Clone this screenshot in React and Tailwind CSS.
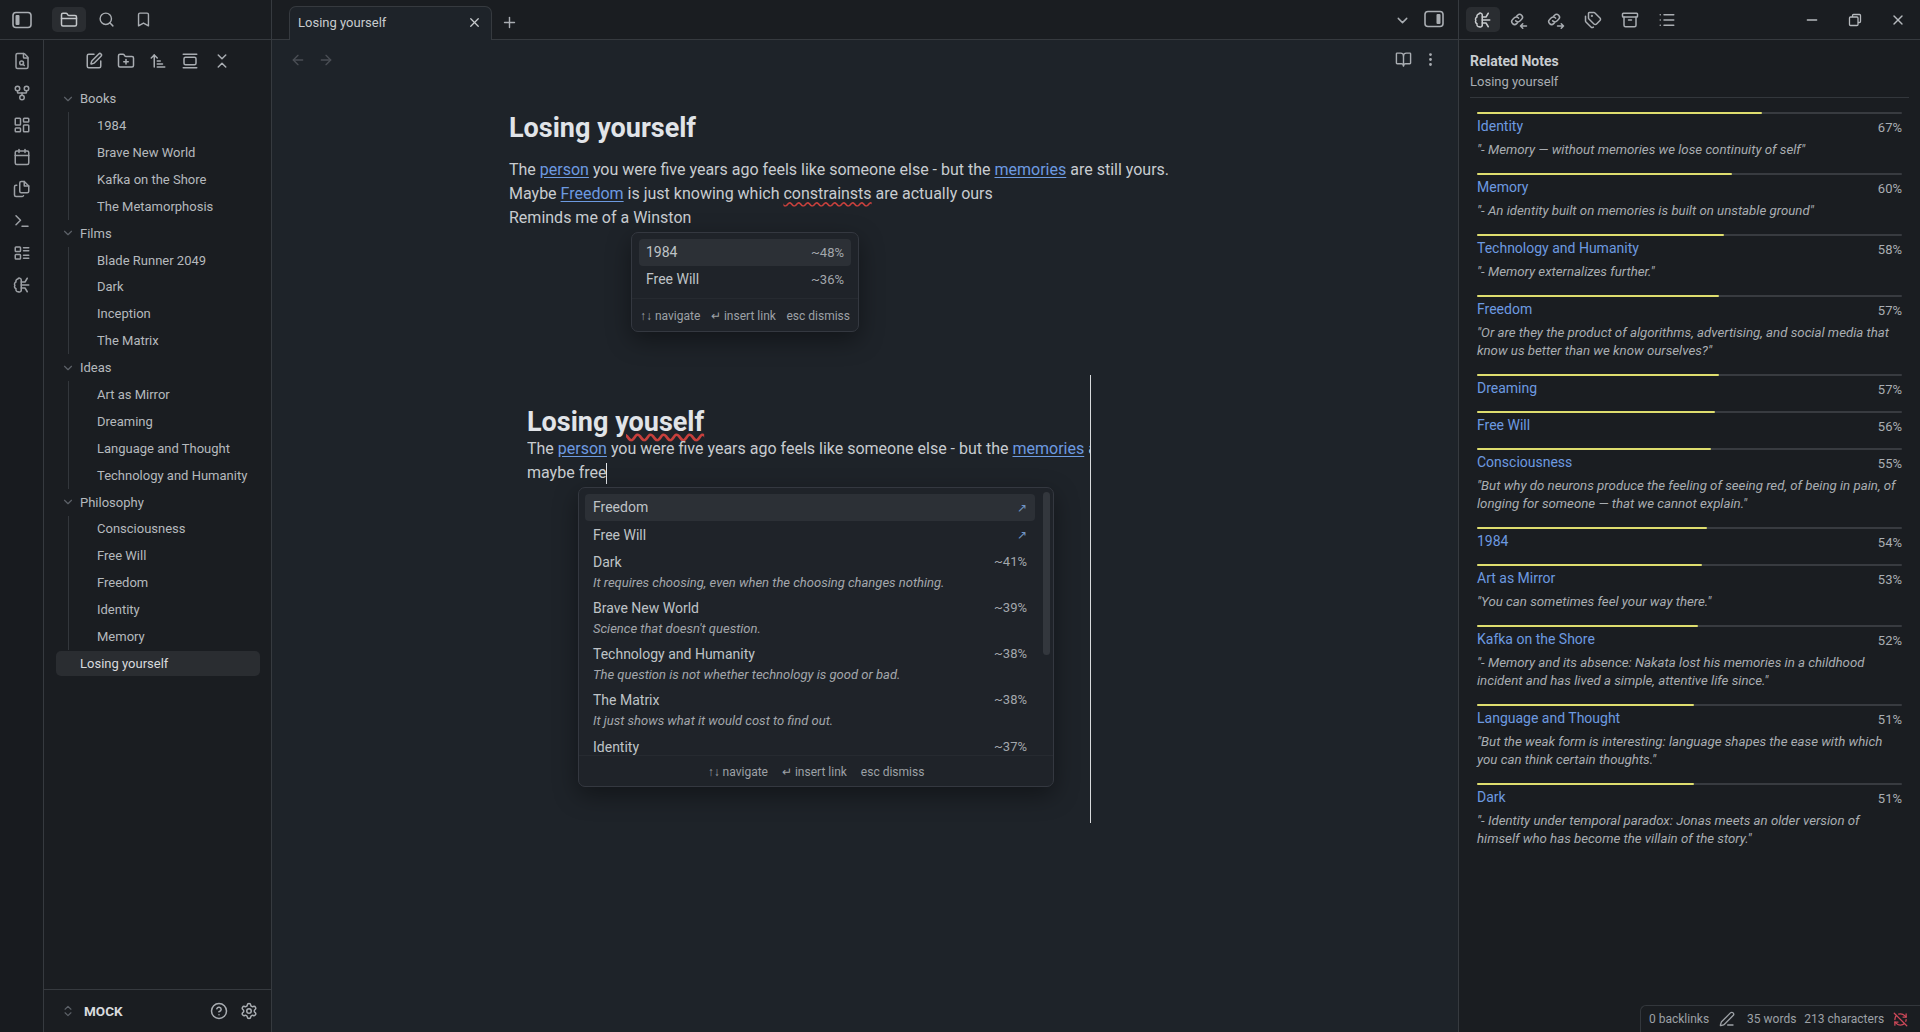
import React from "react";
import {
  Archive, ArrowLeft, ArrowRight, ArrowUpNarrowWide, BookOpen, Bookmark, Calendar, ChevronDown, ChevronsDownUp,
  ChevronsUpDown, CircleHelp, EllipsisVertical, FileSearch, FolderClosed, FolderPlus, GitFork, LayoutDashboard,
  List, Minus, PenLine, Plus, RefreshCwOff, Search, Settings, SquarePen, Tags, Terminal, X,
} from "lucide-react";

const tree = [
  { name: "Books", items: ["1984", "Brave New World", "Kafka on the Shore", "The Metamorphosis"] },
  { name: "Films", items: ["Blade Runner 2049", "Dark", "Inception", "The Matrix"] },
  { name: "Ideas", items: ["Art as Mirror", "Dreaming", "Language and Thought", "Technology and Humanity"] },
  { name: "Philosophy", items: ["Consciousness", "Free Will", "Freedom", "Identity", "Memory"] },
];

const related = [
  { title: "Identity", pct: 67, quote: '"- Memory — without memories we lose continuity of self"' },
  { title: "Memory", pct: 60, quote: '"- An identity built on memories is built on unstable ground"' },
  { title: "Technology and Humanity", pct: 58, quote: '"- Memory externalizes further."' },
  { title: "Freedom", pct: 57, quote: '"Or are they the product of algorithms, advertising, and social media that know us better than we know ourselves?"' },
  { title: "Dreaming", pct: 57 },
  { title: "Free Will", pct: 56 },
  { title: "Consciousness", pct: 55, quote: '"But why do neurons produce the feeling of seeing red, of being in pain, of longing for someone — that we cannot explain."' },
  { title: "1984", pct: 54 },
  { title: "Art as Mirror", pct: 53, quote: '"You can sometimes feel your way there."' },
  { title: "Kafka on the Shore", pct: 52, quote: '"- Memory and its absence: Nakata lost his memories in a childhood incident and has lived a simple, attentive life since."' },
  { title: "Language and Thought", pct: 51, quote: '"But the weak form is interesting: language shapes the ease with which you can think certain thoughts."' },
  { title: "Dark", pct: 51, quote: '"- Identity under temporal paradox: Jonas meets an older version of himself who has become the villain of the story."' },
];

const suggestions = [
  { title: "Dark", pct: "~41%", sub: "It requires choosing, even when the choosing changes nothing." },
  { title: "Brave New World", pct: "~39%", sub: "Science that doesn't question." },
  { title: "Technology and Humanity", pct: "~38%", sub: "The question is not whether technology is good or bad." },
  { title: "The Matrix", pct: "~38%", sub: "It just shows what it would cost to find out." },
];

const Svg = ({ size = 18, children }) => (
  <svg width={size} height={size} viewBox="0 0 24 24" fill="none" stroke="currentColor" strokeWidth="2" strokeLinecap="round" strokeLinejoin="round">
    {children}
  </svg>
);

const PanelIcon = ({ side }) => (
  <svg width="20" height="18" viewBox="0 0 20 18" fill="none">
    <rect x="1" y="1.5" width="18" height="15" rx="3" stroke="currentColor" strokeWidth="1.6" />
    <rect x={side === "left" ? 3.5 : 12.5} y="4" width="4" height="10" rx="1" fill="currentColor" />
  </svg>
);

const BrainIcon = () => (
  <Svg>
    <path d="M11 5a2.5 2.5 0 0 0-4.6-1A3 3 0 0 0 4 8a3 3 0 0 0-1.5 4.5A3 3 0 0 0 4 17a3 3 0 0 0 3 4 2.8 2.8 0 0 0 4-1.5z" />
    <path d="M11 8h5l3-5M11 12h10M11 16h5l3 5" />
  </Svg>
);

const LinkArrow = ({ out }) => (
  <Svg>
    <path d="M7.5 13a3.8 3.8 0 0 0 5.7.4l2.3-2.3a3.8 3.8 0 0 0-5.4-5.4L9 6.8" />
    <path d="M11.5 9.5a3.8 3.8 0 0 0-5.7-.4l-2.3 2.3a3.8 3.8 0 0 0 5.4 5.4l1.1-1.1" />
    {out ? <path d="M14 20h8M19 17l3 3-3 3" /> : <path d="M14 20h8M17 17l-3 3 3 3" />}
  </Svg>
);

const FilesIcon = () => (
  <Svg>
    <path d="M15 2h-4a2 2 0 0 0-2 2v11a2 2 0 0 0 2 2h8a2 2 0 0 0 2-2V8z" />
    <path d="M15 2v6h6" />
    <path d="M5 7H4a2 2 0 0 0-2 2v11a2 2 0 0 0 2 2h8a2 2 0 0 0 2-1" />
  </Svg>
);

const ChecklistIcon = () => (
  <Svg>
    <rect x="3" y="4" width="7" height="6" rx="1" />
    <rect x="3" y="14" width="7" height="6" rx="1" />
    <path d="M14 5h7M14 9h7M14 15h7M14 19h7" />
  </Svg>
);

const RestoreIcon = () => (
  <svg width="14" height="14" viewBox="0 0 14 14" fill="none" stroke="currentColor" strokeWidth="1.3">
    <rect x="1.5" y="4" width="8.5" height="8.5" rx="1" />
    <path d="M4.5 4V2.5a1 1 0 0 1 1-1h6a1 1 0 0 1 1 1v6a1 1 0 0 1-1 1H10" />
  </svg>
);

const LayoutGalleryIcon = () => (
  <Svg>
    <path d="M3 3h18M3 21h18" />
    <rect x="4" y="7" width="16" height="10" rx="2" />
  </Svg>
);

const Folder = ({ group }) => (
  <div>
    <div className="flex h-[26.9px] items-center">
      <ChevronDown size={14} className="ml-[17px] text-[#5c6168]" />
      <span className="ml-[5px]">{group.name}</span>
    </div>
    <div className="ml-[24px] border-l border-[#33373c]">
      {group.items.map((item) => (
        <div key={item} className="flex h-[26.9px] items-center pl-[28px]">{item}</div>
      ))}
    </div>
  </div>
);

const LeftColumn = () => (
  <div className="flex h-full w-[272px] shrink-0 flex-col border-r border-[#363a3f] bg-[#1a1d21]">
    <div className="flex h-[40px] shrink-0 items-center border-b border-[#363a3f] text-[#a9adb2]">
      <div className="ml-[12px] w-[40px]"><PanelIcon side="left" /></div>
      <div className="flex h-[25px] w-[34px] items-center justify-center rounded-[5px] bg-[#2a2d31] text-[#c4c7ca]"><FolderClosed size={18} /></div>
      <div className="ml-[7px] flex w-[26px] justify-center"><Search size={17} /></div>
      <div className="ml-[11px] flex w-[26px] justify-center"><Bookmark size={17} /></div>
    </div>
    <div className="flex min-h-0 flex-1">
      <div className="flex w-[44px] shrink-0 flex-col items-center gap-[14px] border-r border-[#363a3f] bg-[#181b1f] pt-[12px] text-[#9ca0a5]">
        <FileSearch size={18} />
        <GitFork size={18} />
        <LayoutDashboard size={18} />
        <Calendar size={18} />
        <FilesIcon />
        <Terminal size={18} />
        <ChecklistIcon />
        <BrainIcon />
      </div>
      <div className="flex min-w-0 flex-1 flex-col">
        <div className="flex h-[45.5px] shrink-0 items-center gap-[14px] pb-[4px] pl-[41px] text-[#a9adb2]">
          <SquarePen size={18} />
          <FolderPlus size={18} />
          <ArrowUpNarrowWide size={18} />
          <LayoutGalleryIcon />
          <ChevronsDownUp size={18} />
        </div>
        <div className="flex-1 text-[13px] text-[#b5b9bd]">
          {tree.map((group) => <Folder key={group.name} group={group} />)}
          <div className="ml-[12px] mr-[11px] mt-px flex h-[25px] items-center rounded-[5px] bg-[#2a2d31] pl-[24px] text-[#d8dadd]">Losing yourself</div>
        </div>
        <div className="flex h-[43px] shrink-0 items-center border-t border-[#363a3f]">
          <ChevronsUpDown size={14} className="ml-[17px] text-[#5c6168]" />
          <span className="ml-[9px] flex-1 text-[13.5px] font-bold text-[#d8dadd]">MOCK</span>
          <CircleHelp size={18} className="text-[#a9adb2]" />
          <Settings size={18} className="ml-[12px] mr-[13px] text-[#a9adb2]" />
        </div>
      </div>
    </div>
  </div>
);

const FooterHints = ({ className }) => (
  <div className={"flex items-center text-[12px] text-[#9da1a6] " + className}>
    <span>↑↓ navigate</span>
    <span>↵ insert link</span>
    <span>esc dismiss</span>
  </div>
);

const SmallPopup = () => (
  <div className="absolute left-[359px] top-[232px] h-[100px] w-[228px] rounded-[7px] border border-[#343840] bg-[#1f2329] px-[7px] pt-[6px] text-[14px] text-[#bfc3c7] shadow-[0_8px_24px_rgba(0,0,0,0.4)]">
    <div className="flex h-[27px] items-center justify-between rounded-[4px] bg-[#2c3036] px-[7px]">
      <span>1984</span><span className="text-[13px] text-[#a3a7ac]">~48%</span>
    </div>
    <div className="flex h-[27px] items-center justify-between px-[7px]">
      <span>Free Will</span><span className="text-[13px] text-[#a3a7ac]">~36%</span>
    </div>
    <div className="-mx-[7px] mt-[5px] border-t border-[#262a30]">
      <FooterHints className="h-[34px] justify-between px-[8px]" />
    </div>
  </div>
);

const BigPopup = () => (
  <div className="absolute left-[306px] top-[487px] h-[300px] w-[476px] overflow-hidden rounded-[7px] border border-[#343840] bg-[#1f2329] text-[14px] text-[#bfc3c7] shadow-[0_8px_24px_rgba(0,0,0,0.4)]">
    <div className="absolute right-[3px] top-[4px] h-[163px] w-[7px] rounded-[4px] bg-[#33373d]" />
    <div className="h-[267px] overflow-hidden pl-[6px] pr-[18px] pt-[6px]">
      <div className="flex h-[27px] items-center justify-between rounded-[4px] bg-[#2c3036] px-[8px]">
        <span>Freedom</span><span className="text-[12px] text-[#6f94c4]">↗</span>
      </div>
      <div className="flex h-[28px] items-center justify-between px-[8px]">
        <span>Free Will</span><span className="text-[12px] text-[#6f94c4]">↗</span>
      </div>
      {suggestions.map((row) => (
        <div key={row.title} className="h-[46px] px-[8px]">
          <div className="flex h-[26px] items-center justify-between">
            <span>{row.title}</span><span className="text-[13px] text-[#a3a7ac]">{row.pct}</span>
          </div>
          <div className="-mt-[2px] text-[13px] italic text-[#a3a7ac]">{row.sub}</div>
        </div>
      ))}
      <div className="flex h-[28px] items-center justify-between px-[8px]">
        <span>Identity</span><span className="text-[13px] text-[#a3a7ac]">~37%</span>
      </div>
    </div>
    <div className="border-t border-[#262a30]">
      <FooterHints className="h-[31px] justify-center gap-[14px]" />
    </div>
  </div>
);

const Wiki = ({ children }) => <span className="text-[#6d9ae0] underline underline-offset-2">{children}</span>;

const Main = () => (
  <div className="relative flex h-full min-w-0 flex-1 flex-col bg-[#1e2329]">
    <div className="flex h-[40px] shrink-0 items-end border-b border-[#363a3f] bg-[#1a1d21] text-[#a9adb2]">
      <div className="relative -mb-px ml-[17px] flex h-[34px] w-[203px] items-center justify-between rounded-t-[7px] border border-b-0 border-[#363a3f] bg-[#1e2329] pb-[2px] pl-[8px] pr-[9px] text-[13px] text-[#c8cbce]">
        <span>Losing yourself</span>
        <X size={15} />
      </div>
      <Plus size={17} className="mb-[8px] ml-[9px]" />
      <div className="ml-auto mb-[10px] mr-[13px]"><ChevronDown size={17} /></div>
      <div className="mb-[11px] mr-[14px]"><PanelIcon side="right" /></div>
    </div>
    <div className="flex h-[39px] shrink-0 items-center pl-[18px] text-[#4a4e54]">
      <ArrowLeft size={16} />
      <ArrowRight size={16} className="ml-[12px]" />
      <div className="ml-auto flex items-center gap-[10px] pr-[19px] text-[#a9adb2]">
        <BookOpen size={17} />
        <EllipsisVertical size={17} />
      </div>
    </div>
    <div className="pl-[237px] text-[16px] leading-[24px] text-[#c8ccd0]">
      <h1 className="mt-[31px] text-[27px] font-bold leading-[36px] text-[#e1e4e8]">Losing yourself</h1>
      <div className="mt-[12px] whitespace-nowrap">The <Wiki>person</Wiki> you were five years ago feels like someone else - but the <Wiki>memories</Wiki> are still yours.</div>
      <div className="whitespace-nowrap">Maybe <Wiki>Freedom</Wiki> is just knowing which <span className="underline decoration-[#c8403c] decoration-wavy underline-offset-2">constrainsts</span> are actually ours</div>
      <div>Reminds me of a Winston</div>
      <div className="ml-[18px] mt-[145px] h-[448px] w-[564px] overflow-hidden whitespace-nowrap border-r border-[#d8dadc] pt-[32px]">
        <h2 className="text-[27px] font-bold leading-[30px] text-[#e1e4e8]">Losing <span className="underline decoration-[#c8403c] decoration-wavy underline-offset-2">youself</span></h2>
        <div>The <Wiki>person</Wiki> you were five years ago feels like someone else - but the <Wiki>memories</Wiki> are still yours.</div>
        <div className="flex h-[24px] items-center">maybe free<span className="h-[21px] w-px bg-[#e1e4e8]" /></div>
      </div>
    </div>
    <SmallPopup />
    <BigPopup />
  </div>
);

const RelatedItem = ({ item }) => (
  <div className="pb-[10px]">
    <div className="h-[2px] rounded-full bg-[#383b40]">
      <div className="h-full rounded-full bg-[#dedd6e]" style={{ width: item.pct + "%" }} />
    </div>
    <div className="mb-px mt-px flex h-[23px] items-center justify-between">
      <span className="text-[14px] text-[#6d9ae0]">{item.title}</span>
      <span className="mt-[2px] text-[13px] text-[#a9adb2]">{item.pct}%</span>
    </div>
    {item.quote && <div className="mb-[4px] mt-[3px] text-[13.25px] italic leading-[18px] text-[#a9adb2]">{item.quote}</div>}
  </div>
);

const RightColumn = () => (
  <div className="flex h-full w-[462px] shrink-0 flex-col border-l border-[#363a3f] bg-[#1a1d21]">
    <div className="flex h-[40px] shrink-0 items-center border-b border-[#363a3f] text-[#a9adb2]">
      <div className="ml-[7px] flex h-[25px] w-[34px] items-center justify-center rounded-[5px] bg-[#2a2d31] text-[#c8cbce]"><BrainIcon /></div>
      <div className="ml-[10px] flex items-center gap-[19px]">
        <LinkArrow />
        <LinkArrow out />
        <Tags size={18} />
        <Archive size={18} />
        <List size={18} />
      </div>
      <div className="ml-auto flex items-center gap-[28px] pr-[14px] text-[#b5b9bd]">
        <Minus size={16} />
        <RestoreIcon />
        <X size={16} />
      </div>
    </div>
    <div className="px-[11px] pt-[10px]">
      <div className="text-[14px] font-bold leading-[22px] text-[#c8ccd0]">Related Notes</div>
      <div className="text-[13px] leading-[20px] text-[#a9adb2]">Losing yourself</div>
      <div className="mt-[5px] border-t border-[#33373c]" />
    </div>
    <div className="pl-[18px] pr-[18px] pt-[14px]">
      {related.map((item) => <RelatedItem key={item.title} item={item} />)}
    </div>
  </div>
);

const StatusBar = () => (
  <div className="absolute bottom-0 right-0 flex h-[27px] w-[280px] items-center whitespace-nowrap rounded-tl-[6px] border-l border-t border-[#33373c] bg-[#1a1d21] pl-[8px] text-[12px] text-[#9da1a6]">
    <span>0 backlinks</span>
    <PenLine size={16} className="ml-[10px]" />
    <span className="ml-[12px]">35 words</span>
    <span className="ml-[8px]">213 characters</span>
    <RefreshCwOff size={15} className="ml-[9px] text-[#d0495a]" />
  </div>
);

export default function App() {
  return (
    <div className="relative flex h-[1032px] w-[1920px] overflow-hidden bg-[#1a1d21] font-['Roboto',sans-serif]">
      <LeftColumn />
      <Main />
      <RightColumn />
      <StatusBar />
    </div>
  );
}
